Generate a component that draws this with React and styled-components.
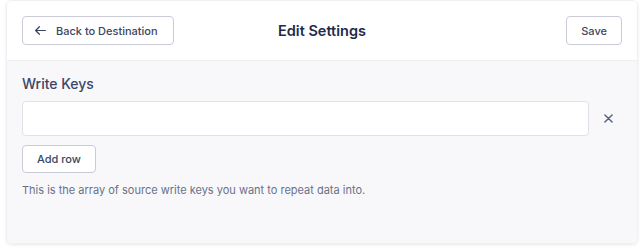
import React, { useState } from "react";
import styled, { createGlobalStyle } from "styled-components";

const GlobalStyle = createGlobalStyle`
  html, body {
    margin: 0;
    padding: 0;
    background: #ffffff;
    font-family: Inter, "Noto Sans", sans-serif;
    -webkit-font-smoothing: antialiased;
  }
`;

const ArrowLeft = () => (
  <svg width="13" height="13" viewBox="0 0 24 24" fill="none" stroke="currentColor" strokeWidth="2.3" strokeLinecap="round" strokeLinejoin="round">
    <path d="M21 12H3" />
    <path d="M10 5l-7 7 7 7" />
  </svg>
);

const CloseIcon = () => (
  <svg width="9" height="9" viewBox="0 0 10 10" fill="none" stroke="currentColor" strokeWidth="1.6" strokeLinecap="round">
    <path d="M1 1l8 8M9 1l-8 8" />
  </svg>
);

const EditSettings = () => {
  const [keys, setKeys] = useState([""]);

  const addRow = () => setKeys([...keys, ""]);
  const removeRow = (i) => setKeys(keys.filter((_, idx) => idx !== i));

  return (
    <Page>
      <Card>
        <Header>
          <HeaderSide>
            <OutlineButton>
              <ArrowLeft />
              <span>Back to Destination</span>
            </OutlineButton>
          </HeaderSide>
          <Title>Edit Settings</Title>
          <HeaderSide right>
            <OutlineButton wide>Save</OutlineButton>
          </HeaderSide>
        </Header>
        <Body>
          <Label>Write Keys</Label>
          {keys.map((value, i) => (
            <KeyRow key={i}>
              <KeyInput
                value={value}
                onChange={(e) =>
                  setKeys(keys.map((k, idx) => (idx === i ? e.target.value : k)))
                }
              />
              <RemoveButton onClick={() => removeRow(i)}>
                <CloseIcon />
              </RemoveButton>
            </KeyRow>
          ))}
          <AddButton onClick={addRow}>Add row</AddButton>
          <HelpText>
            This is the array of source write keys you want to repeat data into.
          </HelpText>
        </Body>
      </Card>
    </Page>
  );
};

const Page = styled.div`
  padding: 0 5px 7px 6px;
`;

const Card = styled.div`
  height: 244px;
  display: flex;
  flex-direction: column;
  border-radius: 6px;
  border: 1px solid #eef0f3;
  box-shadow: 0 1px 3px rgba(30, 40, 70, 0.1);
  overflow: hidden;
  box-sizing: border-box;
`;

const Header = styled.header`
  height: 59px;
  flex-shrink: 0;
  display: grid;
  grid-template-columns: 1fr auto 1fr;
  align-items: center;
  padding: 0 15px;
  background: #ffffff;
  border-bottom: 1px solid #eceef2;
`;

const HeaderSide = styled.div`
  display: flex;
  justify-content: ${(p) => (p.right ? "flex-end" : "flex-start")};
`;

const Title = styled.h1`
  margin: 0;
  font-size: 14.5px;
  font-weight: 600;
  color: #1f2a48;
`;

const OutlineButton = styled.button`
  height: 29px;
  display: flex;
  align-items: center;
  justify-content: center;
  gap: 9px;
  padding: ${(p) => (p.wide ? "0 14px" : "0 15px 0 11px")};
  background: #ffffff;
  border: 1px solid #c9ccd6;
  border-radius: 4px;
  font-family: inherit;
  font-size: 11px;
  font-weight: 500;
  color: #3b4662;
  cursor: pointer;
`;

const Body = styled.div`
  flex: 1;
  background: #f8f8fa;
  padding: 13px 16px 0 15px;
  display: flex;
  flex-direction: column;
  align-items: flex-start;
`;

const Label = styled.div`
  font-size: 14px;
  line-height: 20px;
  font-weight: 500;
  color: #3a4766;
  margin-bottom: 7px;
`;

const KeyRow = styled.div`
  display: flex;
  align-items: center;
  width: 100%;
  margin-bottom: 9px;
`;

const KeyInput = styled.input`
  flex: 1;
  height: 35px;
  box-sizing: border-box;
  border: 1px solid #dfe1e7;
  border-radius: 4px;
  background: #ffffff;
  padding: 0 10px;
  font-family: inherit;
  font-size: 13px;
  outline: none;
`;

const RemoveButton = styled.button`
  width: 26px;
  height: 26px;
  margin-left: 6px;
  display: flex;
  align-items: center;
  justify-content: center;
  background: none;
  border: none;
  padding: 0;
  color: #56617c;
  cursor: pointer;
`;

const AddButton = styled.button`
  height: 28px;
  padding: 0 14px;
  background: #ffffff;
  border: 1px solid #c9ccd6;
  border-radius: 4px;
  font-family: inherit;
  font-size: 11px;
  font-weight: 500;
  color: #3b4662;
  cursor: pointer;
`;

const HelpText = styled.p`
  margin: 9px 0 0;
  font-size: 11px;
  line-height: 16px;
  color: #687188;
`;

const App = () => (
  <>
    <GlobalStyle />
    <EditSettings />
  </>
);

export default App;
